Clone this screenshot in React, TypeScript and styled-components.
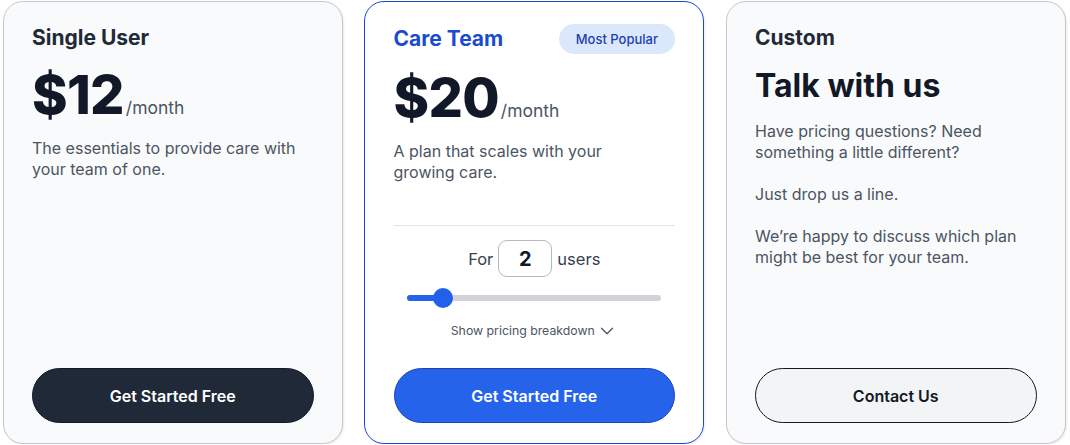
import React, { FunctionComponent, useState } from 'react'
import styled, { createGlobalStyle, css } from 'styled-components'
import { ChevronDown } from 'lucide-react'

const GlobalStyle = createGlobalStyle`
  html, body {
    margin: 0;
    padding: 0;
    background: #ffffff;
  }
  body {
    font-family: Inter, 'Noto Sans', 'Liberation Sans', sans-serif;
    -webkit-font-smoothing: antialiased;
  }
  * {
    box-sizing: border-box;
  }
`

const PlanGrid = styled.div`
  display: grid;
  grid-template-columns: repeat(3, 340px);
  column-gap: 21.5px;
  padding: 1px 0 0 2.5px;
`

const Card = styled.div<{ $featured?: boolean }>`
  height: 443px;
  display: flex;
  flex-flow: column nowrap;
  padding: 22px 28px 20px 28.5px;
  border-radius: 20px;
  border: 1.2px solid #c5c7cb;
  background: #f9fafb;
  box-shadow: 1px 1px 2px rgba(0, 0, 0, 0.08);
  ${(p) =>
    p.$featured &&
    css`
      background: #ffffff;
      border: 1.5px solid #1a47d6;
    `}
`

const TitleRow = styled.div`
  display: flex;
  flex-flow: row nowrap;
  justify-content: space-between;
  align-items: center;
  min-height: 28px;
`

const PlanName = styled.div<{ $color?: string }>`
  font-size: 21px;
  line-height: 28px;
  font-weight: 700;
  color: ${(p) => p.$color ?? '#1f2937'};
`

const Badge = styled.div`
  height: 30px;
  padding: 0 17px;
  border-radius: 15px;
  background: #dbe8fc;
  color: #1e3fae;
  font-size: 13px;
  font-weight: 500;
  display: flex;
  align-items: center;
`

const PriceRow = styled.div<{ $top?: number }>`
  margin-top: ${(p) => p.$top ?? 18}px;
  height: 50px;
  display: flex;
  flex-flow: row nowrap;
  align-items: baseline;
`

const Amount = styled.span`
  font-size: 54px;
  line-height: 50px;
  font-weight: 800;
  letter-spacing: -0.7px;
  color: #111827;
`

const Period = styled.span`
  font-size: 17.5px;
  line-height: 1;
  font-weight: 400;
  color: #4b5563;
  margin-left: 2px;
`

const Heading = styled.div`
  margin-top: 14px;
  font-size: 32px;
  line-height: 40px;
  font-weight: 700;
  color: #111827;
`

const Desc = styled.p<{ $top?: number }>`
  margin: ${(p) => p.$top ?? 18}px 0 0 0;
  font-size: 16px;
  line-height: 21px;
  color: #4b5563;
  & + & {
    margin-top: 21px;
  }
`

const Divider = styled.div`
  margin-top: 42px;
  height: 1px;
  background: #e2e4e8;
`

const UsersRow = styled.div`
  margin-top: 14px;
  display: flex;
  flex-flow: row nowrap;
  justify-content: center;
  align-items: center;
  gap: 5px;
  font-size: 16.5px;
  color: #374151;
`

const UsersBox = styled.div`
  width: 54px;
  height: 37px;
  border: 1px solid #b4b8be;
  border-radius: 9px;
  display: flex;
  align-items: center;
  justify-content: center;
  font-size: 20px;
  font-weight: 700;
  color: #111827;
`

const Track = styled.div`
  position: relative;
  margin: 11px auto 0 auto;
  width: 254px;
  height: 20px;
  display: flex;
  align-items: center;
`

const Rail = styled.div`
  width: 100%;
  height: 6px;
  border-radius: 3px;
  background: #d1d3d8;
`

const Fill = styled.div`
  position: absolute;
  left: 0;
  top: 7px;
  height: 6px;
  border-radius: 3px;
  background: #2563eb;
`

const Thumb = styled.div`
  position: absolute;
  top: 0;
  width: 20px;
  height: 20px;
  border-radius: 50%;
  background: #2160e8;
`

const Breakdown = styled.div`
  margin-top: 12px;
  display: flex;
  justify-content: center;
  align-items: center;
  gap: 0;
  font-size: 12.3px;
  line-height: 18px;
  color: #4b5563;
  svg {
    color: #4b5563;
    margin-left: 1px;
  }
`

const Button = styled.button<{ $variant: 'dark' | 'blue' | 'outline' }>`
  margin-top: auto;
  height: 55px;
  width: 100%;
  border-radius: 28px;
  font-family: inherit;
  font-size: 16px;
  font-weight: 600;
  cursor: pointer;
  ${(p) =>
    p.$variant === 'dark' &&
    css`
      background: #1f2937;
      color: #ffffff;
      border: 1px solid #111827;
    `}
  ${(p) =>
    p.$variant === 'blue' &&
    css`
      background: #2563eb;
      color: #ffffff;
      border: 1px solid #1d43b8;
    `}
  ${(p) =>
    p.$variant === 'outline' &&
    css`
      background: #f3f4f6;
      color: #111827;
      border: 1.5px solid #111827;
    `}
`

const MIN_USERS = 1
const MAX_USERS = 10
const TRACK_W = 254
const THUMB_W = 20

const UserSlider: FunctionComponent<{ value: number }> = ({ value }) => {
  const frac = (value - MIN_USERS) / (MAX_USERS - MIN_USERS)
  const left = frac * (TRACK_W - THUMB_W)
  return (
    <Track>
      <Rail />
      <Fill style={{ width: left + THUMB_W / 2 }} />
      <Thumb style={{ left }} />
    </Track>
  )
}

const App = () => {
  const [users] = useState(2)
  return (
    <>
      <GlobalStyle />
      <PlanGrid>
        <Card>
          <TitleRow>
            <PlanName>Single User</PlanName>
          </TitleRow>
          <PriceRow>
            <Amount>$12</Amount>
            <Period>/month</Period>
          </PriceRow>
          <Desc>
            The essentials to provide care with
            <br />
            your team of one.
          </Desc>
          <Button $variant="dark">Get Started Free</Button>
        </Card>

        <Card $featured>
          <TitleRow>
            <PlanName $color="#1a4bcf">Care Team</PlanName>
            <Badge>Most Popular</Badge>
          </TitleRow>
          <PriceRow $top={19}>
            <Amount>$20</Amount>
            <Period>/month</Period>
          </PriceRow>
          <Desc>
            A plan that scales with your
            <br />
            growing care.
          </Desc>
          <Divider />
          <UsersRow>
            For <UsersBox>{users}</UsersBox> users
          </UsersRow>
          <UserSlider value={users} />
          <Breakdown>
            Show pricing breakdown <ChevronDown size={22} strokeWidth={1.4} />
          </Breakdown>
          <Button $variant="blue">Get Started Free</Button>
        </Card>

        <Card>
          <TitleRow>
            <PlanName>Custom</PlanName>
          </TitleRow>
          <Heading>Talk with us</Heading>
          <Desc $top={15}>
            Have pricing questions? Need
            <br />
            something a little different?
          </Desc>
          <Desc>Just drop us a line.</Desc>
          <Desc>
            We’re happy to discuss which plan
            <br />
            might be best for your team.
          </Desc>
          <Button $variant="outline">Contact Us</Button>
        </Card>
      </PlanGrid>
    </>
  )
}

export default App
